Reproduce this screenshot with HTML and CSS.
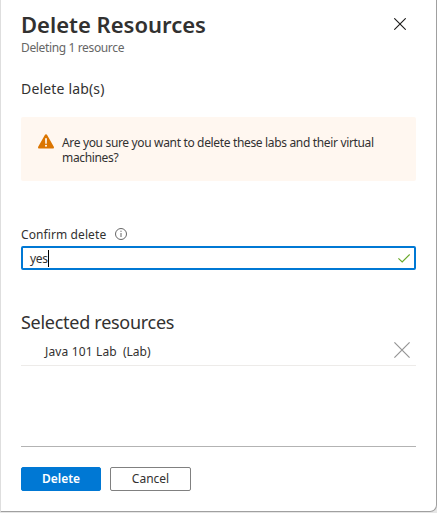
FILE: index.html
```
<!DOCTYPE html>
<html lang="en">
<head>
<meta charset="utf-8">
<title>Delete Resources</title>
<link rel="stylesheet" href="styles.css">
</head>
<body>
<main class="panel">
  <header class="header">
    <div>
      <h1 class="title"><span>Delete Resources</span></h1>
      <p class="subtitle"><span>Deleting 1 resource</span></p>
    </div>
    <svg class="close" width="12" height="12" viewBox="0 0 12 12"><path d="M.3.3l11.4 11.4M11.7.3L.3 11.7"/></svg>
  </header>
  <h2 class="section"><span>Delete lab(s)</span></h2>
  <div class="warning">
    <svg class="warning-icon" width="16" height="15" viewBox="0 0 16 15"><path d="M8 .2c.5 0 .8.2 1 .6l6.800 12c.4.8 0 1.700-.9 1.700H1.100c-.9 0-1.300-.9-.9-1.700L7 .8c.2-.4.5-.6 1-.6z" fill="#db7500"/><path d="M7.100 4.300h1.800L8.700 9.800H7.300z" fill="#fff"/><circle cx="8" cy="11.800" r="1" fill="#fff"/></svg>
    <p class="message">Are you sure you want to delete these labs and their virtual machines?</p>
  </div>
  <div class="label">
    <span class="label-text">Confirm delete</span>
    <svg width="12" height="12" viewBox="0 0 12 12"><circle cx="6" cy="6" r="5.500" fill="none" stroke="#666"/><path d="M6 5v4M6 2.700v1.200" fill="none" stroke="#666"/></svg>
  </div>
  <div class="field">
    <span class="value">yes</span><span class="caret"></span>
    <svg class="check" width="12" height="9" viewBox="0 0 12 9"><path d="M.4 4.400L4.200 8 11.700.5"/></svg>
  </div>
  <h2 class="selected"><span>Selected resources</span></h2>
  <div class="resource">
    <span class="name">Java 101 Lab</span><span class="kind">(Lab)</span>
    <svg class="remove" width="16" height="16" viewBox="0 0 16 16"><path d="M.4.4l15.200 15.200M15.600.4L.4 15.600"/></svg>
  </div>
  <footer class="footer">
    <button class="button primary">Delete</button>
    <button class="button">Cancel</button>
  </footer>
</main>
</body>
</html>
```
FILE: styles.css
```
* { box-sizing: border-box; }
body {
  margin: 0;
  height: 513px;
  overflow: hidden;
  background: #e6e6e6;
  color: #323130;
  font: 12px/15px "Noto Sans", "Open Sans", sans-serif;
}
h1, h2, p { margin: 0; font-weight: 400; }
.panel {
  display: flex;
  flex-direction: column;
  height: 512px;
  padding: 10px 20px 0;
  background: #fff;
  border: solid #a0a0a0;
  border-width: 0 1px 1px;
  border-left-color: #dedede;
  border-bottom-right-radius: 7px;
}
.header { display: flex; justify-content: space-between; height: 68px; }
.title { font-size: 22px; line-height: 28px; font-weight: 600; white-space: nowrap; }
.subtitle { margin-top: 2px; color: #666; line-height: 16px; letter-spacing: -.36px; }
.close { margin: 8px 10px 0 0; fill: none; stroke: #1b1a19; stroke-width: 1.1; }
.section { height: 39px; font-size: 14px; line-height: 22px; letter-spacing: .17px; }
.warning {
  display: flex;
  height: 64px;
  padding: 17px 16px 0 17px;
  background: #fff7f0;
  border-radius: 2px;
}
.message { width: 330px; margin: 1px 0 0 8px; letter-spacing: -.34px; }
.warning-icon { flex: none; }
.label { display: flex; align-items: center; gap: 9px; height: 18px; margin: 44px 0 3px; }
.label-text { letter-spacing: .1px; }
.field {
  display: flex;
  align-items: center;
  height: 24px;
  padding: 0 4px 0 7px;
  border: 2px solid #0078d4;
  border-radius: 2px;
}
.value { letter-spacing: -.3px; }
.caret { width: 1px; height: 17px; background: #000; }
.check { margin-left: auto; fill: none; stroke: #68a829; stroke-width: 1.2; }
.selected { margin-top: 39px; font-size: 18px; line-height: 26px; letter-spacing: -.28px; }
.resource {
  display: flex;
  align-items: center;
  height: 31px;
  padding: 2px 6px 0 24px;
  border-bottom: 1px solid #edebe9;
}
.name { letter-spacing: .15px; }
.kind { margin-left: 6px; }
.remove { margin: -3px 0 0 auto; fill: none; stroke: #959595; stroke-width: 1.2; }
.footer {
  display: flex;
  gap: 9px;
  height: 65px;
  margin-top: auto;
  padding-top: 20px;
  border-top: 1px solid #b3b3b3;
}
.button {
  width: 81px;
  height: 24px;
  padding: 0 0 1px;
  background: #fff;
  border: 1px solid #808080;
  border-radius: 2px;
  color: #323130;
  font: inherit;
}
.primary { width: 80px; background: #0078d4; border-color: #0078d4; color: #fff; font-weight: 600; }
```
